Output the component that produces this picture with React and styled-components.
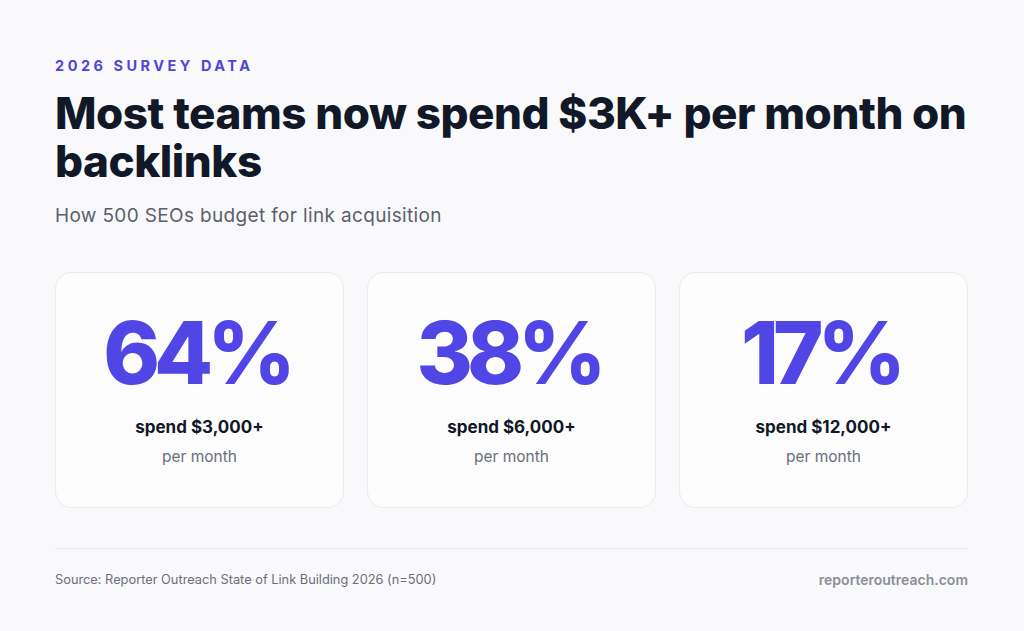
import styled, { createGlobalStyle } from "styled-components";

const Global = createGlobalStyle`
  html, body {
    margin: 0;
    padding: 0;
    background: #f9f9fb;
  }
  body {
    font-family: "Inter", "Noto Sans", sans-serif;
  }
`;

const Page = styled.div`
  width: 1024px;
  height: 631px;
  box-sizing: border-box;
  padding: 56px 56px 0 55px;
  display: flex;
  flex-direction: column;
`;

const Eyebrow = styled.div`
  color: #5045d6;
  font-size: 14.5px;
  font-weight: 700;
  letter-spacing: 3.5px;
  line-height: 20px;
`;

const Title = styled.h1`
  margin: 13px 0 0;
  color: #111827;
  font-size: 44px;
  font-weight: 800;
  line-height: 48px;
  letter-spacing: -0.45px;
  white-space: nowrap;
`;

const Subtitle = styled.p`
  margin: 19px 0 0;
  color: #5b606b;
  font-size: 19px;
  font-weight: 400;
  line-height: 24px;
  letter-spacing: 0.35px;
`;

const Cards = styled.div`
  margin-top: 44px;
  display: grid;
  grid-template-columns: repeat(3, 1fr);
  gap: 23px;
`;

const Card = styled.div`
  height: 236px;
  box-sizing: border-box;
  background: #fcfcfd;
  border: 1px solid #ebebef;
  border-radius: 16px;
  display: flex;
  flex-direction: column;
  align-items: center;
  padding-top: 37px;
`;

const Big = styled.div`
  color: #4f46e5;
  font-size: 86px;
  font-weight: 800;
  line-height: 86px;
  letter-spacing: -6px;
  padding-right: 6px;
`;

const Label = styled.div`
  margin-top: 20px;
  color: #111827;
  font-size: 17px;
  font-weight: 700;
  line-height: 22px;
`;

const Note = styled.div`
  margin-top: 9px;
  color: #6b6f78;
  font-size: 15.5px;
  line-height: 20px;
`;

const Divider = styled.hr`
  margin: 40px 0 0;
  border: 0;
  border-top: 1px solid #e8e8ec;
`;

const Footer = styled.div`
  margin-top: 22px;
  display: flex;
  justify-content: space-between;
  align-items: center;
  font-size: 12.8px;
  line-height: 18px;
`;

const Source = styled.span`
  color: #6b6f78;
`;

const Site = styled.span`
  color: #8b8f98;
  font-size: 14px;
  font-weight: 600;
`;

const stats = [
  { value: "64%", label: "spend $3,000+" },
  { value: "38%", label: "spend $6,000+" },
  { value: "17%", label: "spend $12,000+" },
];

export default function App() {
  return (
    <>
      <Global />
      <Page>
        <Eyebrow>2026 SURVEY DATA</Eyebrow>
        <Title>
          Most teams now spend $3K+ per month on
          <br />
          backlinks
        </Title>
        <Subtitle>How 500 SEOs budget for link acquisition</Subtitle>
        <Cards>
          {stats.map((s) => (
            <Card key={s.value}>
              <Big>{s.value}</Big>
              <Label>{s.label}</Label>
              <Note>per month</Note>
            </Card>
          ))}
        </Cards>
        <Divider />
        <Footer>
          <Source>Source: Reporter Outreach State of Link Building 2026 (n=500)</Source>
          <Site>reporteroutreach.com</Site>
        </Footer>
      </Page>
    </>
  );
}
